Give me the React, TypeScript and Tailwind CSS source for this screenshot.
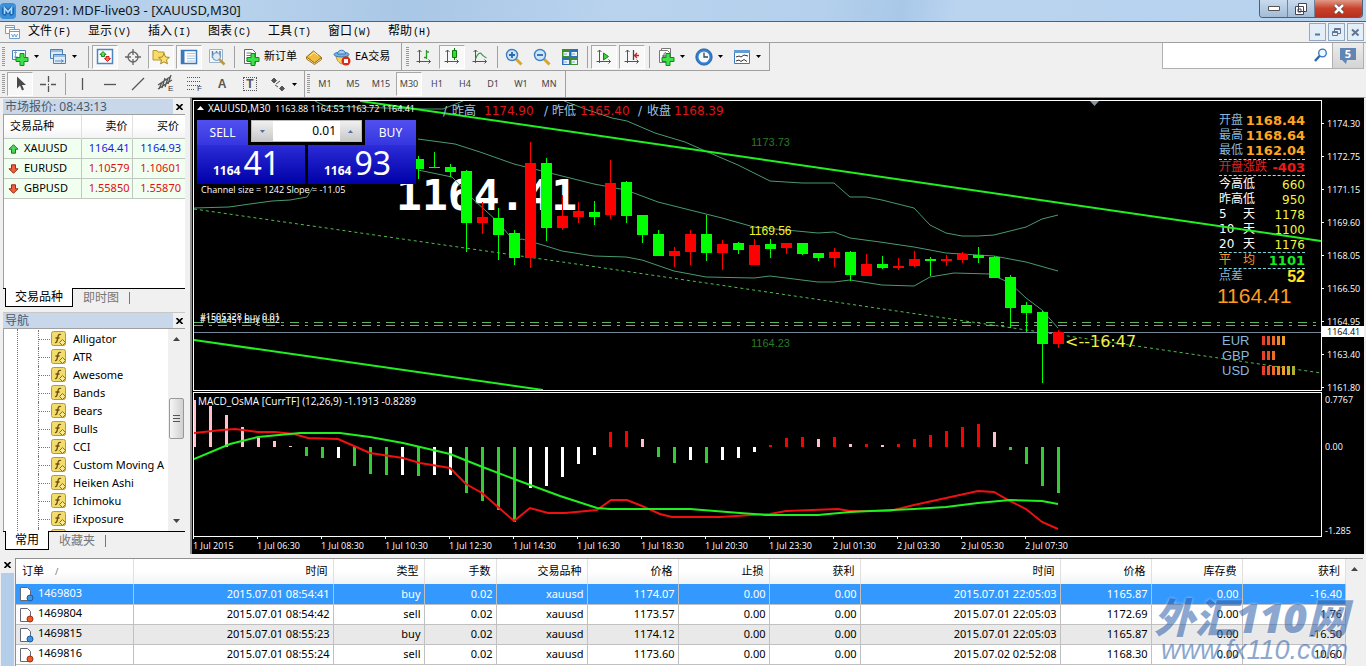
// App.tsx
import React from "react";

type Candle = [color: string, high: number, low: number, top: number, bottom: number];

const STEP = 16;
const FIRST_CANDLE = 14;
const G = "#00ff00";
const R = "#ff0000";

const candles: Candle[] = [
  [G, 55, 78, 58, 68],
  [G, 51, 66, 66, 67],
  [G, 63, 76, 66, 71],
  [G, 69, 151, 70, 122],
  [R, 101, 133, 116, 122],
  [G, 107, 159, 117, 134],
  [G, 129, 164, 132, 157],
  [R, 41, 167, 62, 157],
  [G, 57, 140, 62, 127],
  [R, 94, 129, 115, 127],
  [R, 101, 122, 110, 116],
  [G, 100, 124, 111, 116],
  [R, 59, 118, 82, 114],
  [G, 80, 122, 81, 115],
  [G, 114, 142, 114, 134],
  [G, 129, 155, 133, 155],
  [R, 146, 166, 150, 155],
  [R, 129, 164, 133, 151],
  [G, 114, 160, 133, 152],
  [R, 139, 169, 143, 152],
  [G, 141, 153, 142, 149],
  [R, 138, 164, 144, 164],
  [G, 138, 157, 143, 148],
  [R, 142, 153, 142, 147],
  [G, 142, 154, 142, 153],
  [G, 152, 160, 152, 157],
  [R, 147, 166, 151, 157],
  [G, 150, 180, 151, 174],
  [R, 153, 175, 163, 175],
  [G, 155, 168, 163, 167],
  [R, 157, 169, 165, 167],
  [R, 150, 166, 158, 165],
  [G, 156, 175, 158, 160],
  [R, 154, 165, 158, 160],
  [R, 151, 162, 153, 159],
  [G, 146, 162, 154, 157],
  [G, 155, 177, 156, 177],
  [G, 174, 227, 176, 207],
  [G, 201, 231, 204, 212],
  [G, 210, 282, 211, 243],
  [R, 229, 247, 231, 243],
];

// MACD histogram: signed height above (+) or below (-) zero
const P = "#ffc0cb";
const W = "#ffffff";
const L = "#32cd32";
const histogram: [string, number][] = [
  [P, 47], [P, 41], [P, 32], [P, 20], [P, 9], [P, 6], [P, 1], [L, -9],
  [L, -11], [W, -11], [L, -19], [L, -27], [L, -28], [W, -28], [L, -29], [W, -28],
  [W, -28], [L, -46], [L, -54], [L, -63], [L, -75], [W, -41], [W, -39], [W, -30],
  [W, -17], [W, -8], [R, 15], [R, 16], [P, 8], [L, -10], [L, -16], [W, -13],
  [L, -16], [W, -13], [W, -11], [W, -5], [R, 2], [R, 9], [R, 10], [P, 8],
  [R, 10], [P, 3], [R, 3], [P, 2], [R, 3], [R, 8], [R, 12], [R, 16],
  [R, 20], [R, 23], [P, 15], [L, -3], [L, -17], [L, -39], [L, -46],
];

const upperBand =
  "370,0 394,9 418,17 433,20 461,32 491,41 516,52 544,64 576,80 608,82 640,82 656,96 672,96 688,99 720,107 736,124 752,132 768,135 784,135 800,134 832,126 848,118 864,114";
const middleBand =
  "224,38 261,43 286,51 320,63 352,71 368,75 400,83 432,89 464,101 496,109 528,117 560,126 592,129 624,132 640,131 656,137 686,141 720,146 752,152 784,154 800,155 832,161 864,170";
const lowerBand =
  "224,69 258,76 280,99 304,121 320,140 328,138 352,145 368,150 400,155 432,156 448,159 480,170 512,176 560,177 576,175 592,177 624,181 640,181 656,179 688,184 720,185 736,176 760,172 796,173 816,182 832,197 848,209 864,227";
const macdLine =
  "0,40 28,37 41,36 64,39 81,39 100,41 114,45 144,46 160,53 176,60 209,65 226,70 256,75 272,91 288,100 320,128 336,115 354,120 371,120 403,117 417,107 433,107 448,113 466,121 478,124 526,124 576,121 592,118 644,116 656,118 696,118 720,112 752,105 784,98 800,99 816,108 832,116 848,129 864,136";
const signalLine =
  "0,66 36,51 64,44 106,40 146,40 176,44 209,50 256,61 286,73 320,86 366,103 403,115 416,116 496,116 546,120 572,122 624,122 656,119 720,116 752,114 784,110 816,107 848,108 864,111";

const menus = [
  ["文件", "(F)"],
  ["显示", "(V)"],
  ["插入", "(I)"],
  ["图表", "(C)"],
  ["工具", "(T)"],
  ["窗口", "(W)"],
  ["帮助", "(H)"],
];

const quotes = [
  { symbol: "XAUUSD", bid: "1164.41", ask: "1164.93", up: true },
  { symbol: "EURUSD", bid: "1.10579", ask: "1.10601", up: false },
  { symbol: "GBPUSD", bid: "1.55850", ask: "1.55870", up: false },
];

const indicators = [
  "Alligator", "ATR", "Awesome", "Bands", "Bears", "Bulls", "CCI",
  "Custom Moving A", "Heiken Ashi", "Ichimoku", "iExposure", "",
];

const periods = ["M1", "M5", "M15", "M30", "H1", "H4", "D1", "W1", "MN"];

const prices = [
  "1174.30", "1172.75", "1171.15", "1169.60", "1168.05",
  "1166.50", "1164.95", "1163.40", "1161.80",
];

const times = [
  "1 Jul 2015", "1 Jul 06:30", "1 Jul 08:30", "1 Jul 10:30", "1 Jul 12:30",
  "1 Jul 14:30", "1 Jul 16:30", "1 Jul 18:30", "1 Jul 20:30", "1 Jul 23:30",
  "2 Jul 01:30", "2 Jul 03:30", "2 Jul 05:30", "2 Jul 07:30",
];

const orderHeads = ["时间", "类型", "手数", "交易品种", "价格", "止损", "获利", "时间", "价格", "库存费", "获利"];

const orders = [
  ["1469803", "2015.07.01 08:54:41", "buy", "0.02", "xauusd", "1174.07", "0.00", "0.00", "2015.07.01 22:05:03", "1165.87", "0.00", "-16.40"],
  ["1469804", "2015.07.01 08:54:42", "sell", "0.02", "xauusd", "1173.57", "0.00", "0.00", "2015.07.01 22:05:03", "1172.69", "0.00", "1.76"],
  ["1469815", "2015.07.01 08:55:23", "buy", "0.02", "xauusd", "1174.12", "0.00", "0.00", "2015.07.01 22:05:03", "1165.87", "0.00", "-16.50"],
  ["1469816", "2015.07.01 08:55:24", "sell", "0.02", "xauusd", "1173.60", "0.00", "0.00", "2015.07.02 02:52:08", "1168.30", "0.00", "10.60"],
];

const Icon = ({ children }: { children: React.ReactNode }) => (
  <svg width="18" height="18" viewBox="0 0 18 18" fill="none" className="shrink-0">
    {children}
  </svg>
);

const Plus = ({ x = 5, y = 5 }) => (
  <path
    d={`M${x + 4} ${y + 0.5}h4v4h4v4h-4v4h-4v-4h-4v-4h4z`}
    fill="#3fe04a"
    stroke="#0f8a1c"
  />
);

const Axes = () => (
  <path d="M4.5 2v13M1.5 13.5h14M2.5 4l2-2 2 2M13.5 11.5l2 2-2 2" stroke="#555" />
);

const Tool = ({ label, on, children }: { label: string; on?: boolean; children: React.ReactNode }) => (
  <button
    aria-label={label}
    className={
      on
        ? "flex h-6 w-[26px] mx-px shrink-0 items-center justify-center border border-[#a8a8a8] border-b-white border-r-white bg-[#f8f8f8]"
        : "flex h-6 w-7 shrink-0 items-center justify-center"
    }
  >
    {children}
  </button>
);

const Caret = () => (
  <svg width="5" height="3" viewBox="0 0 5 3" className="mr-[5px] shrink-0">
    <path d="M0 0h5L2.5 3z" fill="#000" />
  </svg>
);

const Sep = () => <span className="mr-[2px] ml-[3px] h-[22px] w-px shrink-0 bg-[#a0a0a0]" />;

const Grip = () => (
  <span className="mr-px ml-[2px] h-5 w-[3px] shrink-0 bg-[repeating-linear-gradient(#999_0_1px,transparent_1px_2px)]" />
);

const Close = ({ label }: { label: string }) => (
  <button aria-label={label} className="flex h-3 w-3 items-center justify-center">
    <svg width="7" height="6" viewBox="0 0 7 6">
      <path d="M.5 0l6 6M6.5 0l-6 6" stroke="#000" strokeWidth="1.6" />
    </svg>
  </button>
);

const TitleBar = () => (
  <header className="flex h-[22px] items-start border-b border-[#4a6280] bg-[linear-gradient(100deg,#a5c3e2_0%,#bcd5ee_14%,#a9c7e6_30%,#b9d3ee_45%,#b4d0ec_60%,#a9c8e8_66%,#bad4f0_70%,#b7d2ee_100%)]">
    <svg width="16" height="18" viewBox="0 0 16 18" className="mt-[2px]">
      <rect y="1" width="16" height="16" rx="4" fill="#3a8fd8" />
      <path d="M2 6l3-2 3 3 3-3 3 2v6l-3 2-3-3-3 3-3-2z" fill="#1c64ae" />
      <path d="M4.5 12V6l3.500 4 3.500-4v6" stroke="#a8dcff" strokeWidth="1.6" fill="none" />
    </svg>
    <h1 className="ml-[5px] flex-1 text-[13px] leading-[21px] text-[#101820]">807291: MDF-live03 - [XAUUSD,M30]</h1>
    <div className="mr-[3px] flex h-[18px] overflow-hidden rounded-b border border-t-0 border-[#4d6078]">
      <button aria-label="最小化" className="flex w-7 items-center justify-center border-r border-[#6f839c] bg-[linear-gradient(#c9dbee,#a2bbd6)]">
        <svg width="12" height="5" viewBox="0 0 12 5"><path d="M.5.5h11v4H.5z" fill="#fff" stroke="#555" /></svg>
      </button>
      <button aria-label="还原" className="flex w-[27px] items-center justify-center border-r border-[#6f839c] bg-[linear-gradient(#c9dbee,#a2bbd6)]">
        <svg width="12" height="12" viewBox="0 0 12 12" fill="#fff" stroke="#445">
          <path d="M3.5.5h8v8h-8zM.5 3.5h8v8h-8zM3 6h3v3H3z" />
        </svg>
      </button>
      <button aria-label="关闭" className="flex w-[47px] items-center justify-center bg-[linear-gradient(#e09a86,#c8412a_50%,#b8301c)]">
        <svg width="12" height="10" viewBox="0 0 12 10">
          <path d="M2 1l8 8M10 1L2 9" stroke="#544" strokeWidth="4" />
          <path d="M2 1l8 8M10 1L2 9" stroke="#fff" strokeWidth="2.5" />
        </svg>
      </button>
    </div>
  </header>
);

const MenuBar = () => (
  <nav className="flex h-[21px] items-center border-b border-[#a0a0a0]">
    <svg width="16" height="15" viewBox="0 0 16 15" className="mr-[7px] ml-[5px]" fill="#fff" stroke="#6f9fd0">
      <path d="M.5.5h9v8h-9z" />
      <path d="M.5 2.5h9" />
      <path d="M4.500 4.500h10v9h-10zM4.500 6.500h10" />
      <path d="M6.500 9l1.500 3 1.500-3 1.500 3 1.500-3" fill="none" />
    </svg>
    {menus.map(([name, key]) => (
      <a key={key} href="#" className="w-[60px] whitespace-nowrap text-xs leading-4 text-black">
        {name}
        <span className="ml-px font-['Liberation_Mono',monospace] text-[10px]">{key}</span>
      </a>
    ))}
    <div className="mr-[2px] ml-auto flex gap-[2px]">
      <button aria-label="最小化图表" className="flex h-[18px] w-[17px] items-center justify-center border border-[#8fa9c4] bg-[#e3eef9]">
        <svg width="9" height="9" viewBox="0 0 9 9"><path d="M2 6.500h5" stroke="#5f7590" strokeWidth="2" /></svg>
      </button>
      <button aria-label="还原图表" className="flex h-[18px] w-[17px] items-center justify-center border border-[#8fa9c4] bg-[#e3eef9]">
        <svg width="9" height="9" viewBox="0 0 9 9" fill="none" stroke="#5f7590"><path d="M2.500 3V.5h6v5H6M.5 3.500h5v4h-5zM.5 4.500h5M3 1.500h5" /></svg>
      </button>
      <button aria-label="关闭图表" className="flex h-[18px] w-[17px] items-center justify-center border border-[#8fa9c4] bg-[#e3eef9]">
        <svg width="9" height="9" viewBox="0 0 9 9"><path d="M1 1.500l6.500 6M7.500 1.500L1 7.500" stroke="#5f7590" strokeWidth="2" /></svg>
      </button>
    </div>
  </nav>
);

const MainToolbar = () => (
  <div className="flex h-7 items-center">
    <div className="flex h-7 w-[402px] shrink-0 items-center border-r border-b border-[#a0a0a0]">
      <Grip />
      <Tool label="新图表">
        <Icon>
          <path d="M1.5 2.5h13v9h-13z" fill="#fff" stroke="#4a7fb8" />
          <path d="M4.5 4v6M3 5l1.500-1.500L6 5M3 9h4" stroke="#7ba3cc" />
          <Plus />
        </Icon>
      </Tool>
      <Caret />
      <Tool label="配置文件">
        <Icon>
          <path d="M1.5 1.5h12v9h-12z" fill="#dcebf8" stroke="#4a7fb8" />
          <path d="M4.5 6.5h12v9h-12z" fill="#dcebf8" stroke="#4a7fb8" />
          <path d="M2 3h11M5 8h11M6 13h9M12 11.500l2 1.500-2 1.500" stroke="#5d8fc4" />
        </Icon>
      </Tool>
      <Caret />
      <span className="w-[3px]" />
      <Sep />
      <Tool label="市场报价" on>
        <Icon>
          <path d="M1.5 1.5h15v14h-15z" fill="#fff" stroke="#4a86c4" strokeWidth="1.5" />
          <path d="M7 3.500l3 3H8.500v2h-3v-2H4z" fill="#5fdc5f" stroke="#1a8a1a" />
          <path d="M11.500 13.500l3-3H13v-2h-3v2H8.500z" fill="#f66" stroke="#c22" />
        </Icon>
      </Tool>
      <Tool label="数据窗口">
        <Icon>
          <circle cx="9" cy="9" r="5" stroke="#666" strokeWidth="1.3" />
          <path d="M9 1v6M9 11v6M1 9h6M11 9h6" stroke="#666" strokeWidth="1.3" />
        </Icon>
      </Tool>
      <Tool label="导航" on>
        <Icon>
          <path d="M1 2.500h4l1 1.500h6v8H1z" fill="#f7dc6a" stroke="#b8962a" />
          <path d="M12 5.500l1.600 3.500 3.800.4-2.900 2.500.9 3.900-3.400-2-3.400 2 .9-3.900-2.900-2.500 3.800-.4z" fill="#fbe26a" stroke="#a8862a" />
        </Icon>
      </Tool>
      <Tool label="终端" on>
        <Icon>
          <path d="M1.5 2.5h15v13h-15z" fill="#fff" stroke="#3a78bc" strokeWidth="1.5" />
          <path d="M2 3h2.500v12H2z" fill="#3a78bc" />
          <path d="M7 5.500h8M7 8h8M7 10.500h8M7 13h8" stroke="#a9c4e0" />
        </Icon>
      </Tool>
      <Tool label="策略测试">
        <Icon>
          <path d="M1.5 1.5h13v13h-13z" fill="#f3f7fb" stroke="#9ab2c8" />
          <path d="M4.5 3v7M8.500 3v3M12 3v6" stroke="#5d7fa4" strokeWidth="1.5" />
          <circle cx="8.500" cy="8.500" r="4" fill="#d4e8f8cc" stroke="#6b8fb4" />
          <path d="M11.500 11.500l5 5" stroke="#c9962e" strokeWidth="2.5" />
        </Icon>
      </Tool>
      <Sep />
      <button className="flex h-6 items-center pl-[5px] text-[11px] whitespace-nowrap text-black">
        <Icon>
          <path d="M2.500 1.500h8l3 3v11h-11z" fill="#fff" stroke="#666" />
          <path d="M4.500 5h5M4.500 7.500h7M4.500 10h4M4.500 12.500h3" stroke="#777" />
          <Plus />
        </Icon>
        <span className="ml-1">新订单</span>
      </button>
      <span className="w-[3px]" />
      <Tool label="MetaEditor">
        <Icon>
          <path d="M1.500 9l7-6 8 6.500-7 5.500z" fill="#f0bc3e" stroke="#9c6f14" />
          <path d="M1.500 9v2l8 5.500 7-5V9.500l-7 5.500z" fill="#fff3c8" stroke="#9c6f14" />
          <path d="M5 8l4-3.500 4 3" stroke="#fff0b0" />
        </Icon>
      </Tool>
      <button className="flex h-6 items-center pl-[5px] text-[11px] whitespace-nowrap text-black">
        <Icon>
          <path d="M3 8c1 5 3 7 6 8 3-1 5-3 6-8z" fill="#f5d35a" stroke="#b58e22" />
          <ellipse cx="8.500" cy="6.500" rx="7.500" ry="2.500" fill="#6fb1e8" stroke="#3a78b4" />
          <path d="M4.500 6c0-5 8-5 8 0z" fill="#9fd0f4" stroke="#3a78b4" />
          <circle cx="13" cy="13" r="4.500" fill="#dc2a1a" />
          <path d="M11 11h4v4h-4z" fill="#fff" />
        </Icon>
        <span className="ml-1">EA交易</span>
      </button>
    </div>
    <div className="flex h-7 w-[368px] shrink-0 items-center border-r border-b border-[#a0a0a0] pl-[2px]">
      <Grip />
      <Tool label="柱状图"><Icon><Axes /><path d="M11.500 2v9M9 9.500h2.500M11.500 4H14" stroke="#2c9a2c" strokeWidth="1.3" /></Icon></Tool>
      <Tool label="蜡烛图" on><Icon><Axes /><path d="M11.500 0v12" stroke="#0a7a0a" /><path d="M9.500 2.500h4v7h-4z" fill="#35dd35" stroke="#0a7a0a" /></Icon></Tool>
      <Tool label="折线图"><Icon><Axes /><path d="M4.500 11c2-6 5-7 6-5s3 3 5 4" stroke="#3a9a4a" strokeWidth="1.2" /></Icon></Tool>
      <Sep />
      <Tool label="放大">
        <Icon>
          <path d="M11 11l5.500 5.500" stroke="#d8a52e" strokeWidth="3" />
          <circle cx="7" cy="7" r="5.500" fill="#cfe6fa" stroke="#3f7fc0" strokeWidth="1.4" />
          <path d="M4 7h6M7 4v6" stroke="#2a6ab0" strokeWidth="1.8" />
        </Icon>
      </Tool>
      <Tool label="缩小">
        <Icon>
          <path d="M11 11l5.500 5.500" stroke="#d8a52e" strokeWidth="3" />
          <circle cx="7" cy="7" r="5.500" fill="#cfe6fa" stroke="#3f7fc0" strokeWidth="1.4" />
          <path d="M4 7h6" stroke="#2a6ab0" strokeWidth="1.8" />
        </Icon>
      </Tool>
      <Tool label="平铺窗口">
        <Icon>
          <path d="M1 1h8v8H1zM9 9h8v8H9z" fill="#3d8f2a" />
          <path d="M9 1h8v8H9zM1 9h8v8H1z" fill="#2f6fb8" />
          <path d="M2.500 4H8v4H2.500zM10.500 4H16v4h-5.500zM2.500 12H8v4H2.500zM10.500 12H16v4h-5.500z" fill="#e9f4ff" />
          <path d="M3 6h3M11 6h3M3 14h3M11 14h3" stroke="#8ab" />
        </Icon>
      </Tool>
      <Sep />
      <Tool label="自动滚动" on><Icon><Axes /><path d="M8.500 5v7l5-3.500z" fill="#3fd23f" stroke="#148014" /></Icon></Tool>
      <Tool label="图表平移" on><Icon><Axes /><path d="M10.500 2v10" stroke="#444" strokeWidth="1.3" /><path d="M16 7.500h-4M14 5l-2.500 2.500L14 10" stroke="#c22" strokeWidth="1.3" /></Icon></Tool>
      <Sep />
      <Tool label="指标列表">
        <Icon>
          <path d="M4.500.5h9v12h-9z" fill="#fff" stroke="#777" />
          <path d="M2.500 2.500h8l2 2v10h-10z" fill="#fff" stroke="#777" />
          <path d="M9 5c-2-1-2 1-2.500 6M5 8h4" stroke="#555" />
          <Plus />
        </Icon>
      </Tool>
      <Caret />
      <Tool label="时间周期">
        <Icon>
          <circle cx="9" cy="9" r="6.800" fill="#f2f8fe" stroke="#2f7fd0" strokeWidth="2.6" />
          <circle cx="9" cy="9" r="8.200" stroke="#1a4f92" strokeWidth=".8" />
          <path d="M9 4.500V9h4" stroke="#444" strokeWidth="1.3" />
        </Icon>
      </Tool>
      <Caret />
      <Tool label="模板">
        <Icon>
          <path d="M1.500 2.500h15v13h-15z" fill="#fff" stroke="#3a78bc" />
          <path d="M1 2h16v3H1z" fill="#5f9cd8" />
          <path d="M3 9l3-1 2 1 3-2 4 1M3 13l3-1 2 1.500 3-2 3 2" stroke="#333" />
        </Icon>
      </Tool>
      <Caret />
    </div>
    <form className="mr-[2px] ml-auto flex h-[26px] items-start self-start">
      <div className="flex h-[26px] w-[171px] items-center border border-t-0 border-[#b0b0b0] bg-white pr-1">
        <input aria-label="搜索" className="w-0 flex-1 px-1 text-xs outline-none" />
        <svg width="15" height="15" viewBox="0 0 15 15" fill="none">
          <circle cx="9.500" cy="5" r="3.800" fill="#eef6ff" stroke="#2f73c0" strokeWidth="1.3" />
          <path d="M6.500 8L2 13" stroke="#2f63a8" strokeWidth="2.4" />
        </svg>
      </div>
      <button type="button" aria-label="消息" className="flex h-[26px] w-[31px] items-center justify-center border-r border-b border-[#b0b0b0] bg-[linear-gradient(#ececec,#d4d4d4)]">
        <svg width="16" height="16" viewBox="0 0 16 16">
          <path d="M0 0h16v12H7l-1 4-4-4H0z" fill="#5f86b4" />
          <text x="8" y="10" textAnchor="middle" className="font-['Noto_Sans',sans-serif] text-[11px] font-bold" fill="#fff">5</text>
        </svg>
      </button>
    </form>
  </div>
);

const LineToolbar = () => (
  <div className="flex h-[26px] items-center">
    <div className="flex h-[26px] w-[305px] shrink-0 items-center border-r border-[#a0a0a0]">
      <Grip />
      <Tool label="光标" on><Icon><path d="M6 1.500v12l3-3 2 5 2-1-2-4.500h4z" fill="#4a4a4a" /></Icon></Tool>
      <Tool label="十字准线"><Icon><path d="M9.500 1v6M9.500 11v6M1 9.500h6M12 9.500h5M9 9.500h1" stroke="#555" strokeWidth="1.3" /></Icon></Tool>
      <Sep />
      <Tool label="垂直线"><Icon><path d="M9.500 3v12" stroke="#555" strokeWidth="1.3" /></Icon></Tool>
      <Tool label="水平线"><Icon><path d="M3 9.500h12" stroke="#555" strokeWidth="1.3" /></Icon></Tool>
      <Tool label="趋势线"><Icon><path d="M3 15L15 3" stroke="#555" strokeWidth="1.3" /></Icon></Tool>
      <Tool label="等距通道">
        <Icon>
          <path d="M1 10L13 2M1 14L15 5M5 13L8 3M8 12l3-9M11 9l3-9M2 14l3-7" stroke="#555" strokeWidth="1.3" />
          <text x="11" y="16" fontSize="8" fontFamily="Liberation Sans, sans-serif" fill="#333">E</text>
        </Icon>
      </Tool>
      <Tool label="斐波纳契">
        <Icon>
          <path d="M2 2.500h14M2 6.500h14M2 10.500h14M2 14.500h8" stroke="#555" strokeDasharray="1 1" />
          <text x="12" y="16" fontSize="8" fontFamily="Liberation Sans, sans-serif" fill="#333">F</text>
        </Icon>
      </Tool>
      <Tool label="文字"><span className="font-['Liberation_Sans',sans-serif] text-xs font-bold text-[#555]">A</span></Tool>
      <Tool label="文字标签">
        <span className="flex h-[14px] w-[14px] items-center justify-center border border-dotted border-[#555] font-['Liberation_Sans',sans-serif] text-xs font-bold text-[#555]">T</span>
      </Tool>
      <Tool label="箭头">
        <Icon><path d="M5 3l2.500 2.500L5 8 2.500 5.500zM13 11l2.500 2.500L13 16l-2.500-2.500zM11 6L7 9M6 10l3 2" fill="#555" stroke="#555" /></Icon>
      </Tool>
      <Caret />
    </div>
    <div className="flex h-[26px] w-[261px] shrink-0 items-center border-r border-[#a0a0a0]">
      <Grip />
      {periods.map((p) => (
        <Tool key={p} label={p} on={p === "M30"}>
          <span className="text-[9px] text-[#444]">{p}</span>
        </Tool>
      ))}
    </div>
  </div>
);

const QuoteArrow = ({ up }: { up: boolean }) => (
  <svg width="11" height="10" viewBox="0 0 11 10" className="mr-[5px] ml-1 inline-block">
    {up ? (
      <path d="M5.500.7l4.500 4.500H7.500v4h-4v-4H1z" fill="#4fd45a" stroke="#18792a" />
    ) : (
      <path d="M5.500 9.300L1 4.800h2.500v-4h4v4H10z" fill="#f0603a" stroke="#9c2a14" />
    )}
  </svg>
);

const PanelTitle = ({ children }: { children: string }) => (
  <div className="flex h-[15px] items-center justify-between">
    <h2 className="flex-1 overflow-hidden bg-[#c8d8ea] pl-[2px] text-xs leading-[15px] whitespace-nowrap text-[#4a5a6c]">{children}</h2>
    <Close label={`关闭 ${children}`} />
  </div>
);

const Tabs = ({ active, other }: { active: string; other: string }) => (
  <div className="flex h-5 items-start border-t border-black bg-[#f0f0f0] text-xs">
    <button className="-mt-px ml-[2px] h-[19px] border border-t-0 border-black bg-white px-[9px] text-black">{active}</button>
    <button className="h-[18px] px-[10px] text-[#777]">{other}</button>
    <span className="mt-[3px] h-3 w-px bg-[#777]" />
  </div>
);

const MarketWatch = () => (
  <section className="mt-px">
    <PanelTitle>市场报价: 08:43:13</PanelTitle>
    <div className="h-[174px] border-t border-l border-[#a0a0a0] bg-white">
      <table className="w-full table-fixed border-collapse text-[11px]">
        <thead>
          <tr className="h-[23px] bg-[linear-gradient(#fff_50%,#f2f3f5)] text-right">
            <th className="w-[77px] border-r border-[#e0e0e0] pl-[6px] text-left font-normal">交易品种</th>
            <th className="w-[51px] border-r border-[#e0e0e0] pr-1 font-normal">卖价</th>
            <th className="pr-[6px] font-normal">买价</th>
          </tr>
        </thead>
        <tbody>
          {quotes.map((q) => (
            <tr key={q.symbol} className={q.up ? "h-5 text-right text-[#1a1ae0]" : "h-5 text-right text-[#e01010]"}>
              <td className="border-y border-r border-[#c0c8c0] bg-[#f0fff0] text-left whitespace-nowrap text-black">
                <QuoteArrow up={q.up} />
                {q.symbol}
              </td>
              <td className="border-y border-r border-[#c0c8c0] bg-[#f0fff0] pr-[2px]">{q.bid}</td>
              <td className="border-y border-[#c0c8c0] bg-[#f0fff0] pr-1">{q.ask}</td>
            </tr>
          ))}
        </tbody>
      </table>
    </div>
    <Tabs active="交易品种" other="即时图" />
  </section>
);

const Navigator = () => (
  <section className="mt-1 flex min-h-0 flex-1 flex-col border-t border-[#c8c8c8]">
    <PanelTitle>导航</PanelTitle>
    <div className="flex min-h-0 flex-1 border-t border-l border-[#a0a0a0] bg-white">
      <ul className="ml-[13px] min-w-0 flex-1 overflow-hidden border-l border-dotted border-[#777] pt-px">
        {indicators.map((name) => (
          <li key={name} className="ml-5 flex h-[18px] items-center border-l border-dotted border-[#777] text-[11px] whitespace-nowrap text-black">
            <span className="w-[11px] shrink-0 border-t border-dotted border-[#777]" />
            <svg width="16" height="16" viewBox="0 0 16 16" className="mr-[6px] ml-[1px] shrink-0">
              <rect x=".5" y=".5" width="14" height="14" rx="2" fill="#f2dc6c" stroke="#b89a30" />
              <path d="M10 3.500c-3-1-3 2-3.500 4.500S5.500 12 4 11.500M4.500 7h4" stroke="#6b4f10" strokeWidth="1.3" fill="none" />
              <path d="M11.500 8.500l3 3-3 3-3-3z" fill="#f8e890" stroke="#8c7020" />
            </svg>
            {name}
          </li>
        ))}
      </ul>
      <div className="flex w-[17px] shrink-0 flex-col items-center bg-[#f0f0f0] py-2">
        <svg width="7" height="4" viewBox="0 0 7 4"><path d="M3.500 0L7 4H0z" fill="#444" /></svg>
        <span className="mt-[57px] flex h-[41px] w-[15px] flex-col items-center justify-center gap-[2px] rounded-[2px] border border-[#999] bg-[linear-gradient(90deg,#f6f6f6,#d0d0d0)]">
          <i className="h-px w-[7px] bg-[#555]" />
          <i className="h-px w-[7px] bg-[#555]" />
          <i className="h-px w-[7px] bg-[#555]" />
        </span>
        <svg width="7" height="4" viewBox="0 0 7 4" className="mt-auto"><path d="M3.500 4L0 0h7z" fill="#444" /></svg>
      </div>
    </div>
    <Tabs active="常用" other="收藏夹" />
  </section>
);

const OneClick = () => (
  <div className="absolute top-[19px] left-[3px] w-[219px] font-['Noto_Sans','Noto_Sans_CJK_SC',sans-serif] text-white">
    <div className="flex h-[25px] justify-between">
      <button className="w-[51px] bg-[linear-gradient(#5050f0,#3636e0)] text-xs">SELL</button>
      <div className="flex h-[22px] w-[111px] border border-[#bbb] bg-white">
        <button aria-label="减少手数" className="flex w-[21px] items-center justify-center bg-[linear-gradient(#f0f0f0,#c8c8c8)]">
          <svg width="5" height="3" viewBox="0 0 5 3"><path d="M0 0h5L2.500 3z" fill="#5070a0" /></svg>
        </button>
        <input aria-label="手数" defaultValue="0.01" className="w-0 flex-1 pr-1 text-right text-xs text-black outline-none" />
        <button aria-label="增加手数" className="flex w-[21px] items-center justify-center bg-[linear-gradient(#f0f0f0,#c8c8c8)]">
          <svg width="5" height="3" viewBox="0 0 5 3"><path d="M2.500 0L5 3H0z" fill="#5070a0" /></svg>
        </button>
      </div>
      <button className="w-[51px] bg-[linear-gradient(#5050f0,#3636e0)] text-xs">BUY</button>
    </div>
    <div className="grid h-[39px] grid-cols-2 gap-[3px]">
      {["41", "93"].map((pips) => (
        <div key={pips} className="flex items-baseline justify-center gap-[3px] bg-[linear-gradient(#2c2cd8,#0000a8)] pr-[9px] leading-9">
          <b className="text-xs">1164</b>
          <span className="text-[32px]">{pips}</span>
        </div>
      ))}
    </div>
  </div>
);

const InfoRow = ({ label, value, tone, num }: { label: string; value: string; tone: string; num: string }) => (
  <div className="flex h-[15px] items-center justify-between whitespace-nowrap">
    <span className={tone}>{label}</span>
    <span className={num}>{value}</span>
  </div>
);

const orangeNum = "text-[13px] font-bold text-[#ffa520]";
const yellowNum = "text-xs text-[#f4f43a]";

const InfoPanel = () => (
  <div className="absolute top-3 right-4 w-[86px] font-['DejaVu_Sans','Noto_Sans_CJK_SC',sans-serif] text-xs leading-[15px]">
    <InfoRow label="开盘" value="1168.44" tone="text-[#87b8dc]" num={orangeNum} />
    <InfoRow label="最高" value="1168.64" tone="text-[#87b8dc]" num={orangeNum} />
    <InfoRow label="最低" value="1162.04" tone="text-[#87b8dc]" num={orangeNum} />
    <div className="my-px border-y border-dashed border-[#e8c8c0]">
      <InfoRow label="开盘涨跌" value="-403" tone="text-[#e02020]" num="text-[13px] font-bold text-[#f01818]" />
    </div>
    <InfoRow label="今高低" value="660" tone="text-white" num={yellowNum} />
    <InfoRow label="昨高低" value="950" tone="text-white" num={yellowNum} />
    {[["5", "1178"], ["10", "1100"], ["20", "1176"]].map(([days, range]) => (
      <div key={days} className="flex h-[15px] text-white">
        <span className="w-6">{days}</span>
        <span>天</span>
        <span className="ml-auto text-xs text-[#f4f43a]">{range}</span>
      </div>
    ))}
    <div className="border-y border-dashed border-[#7fd0d8]">
      <div className="flex h-[15px] text-[#ff9820]">
        <span className="w-6">平</span>
        <span>均</span>
        <span className="ml-auto text-[13px] font-bold text-[#10f020]">1101</span>
      </div>
    </div>
    <InfoRow label="点差" value="52" tone="text-[#87b8dc]" num="font-['Liberation_Sans',sans-serif] text-base font-bold text-[#ffe620]" />
    <div className="-ml-[2px] h-6 font-['Liberation_Sans',sans-serif] text-[21px] leading-6 text-[#ff9c1c]">1164.41</div>
    <div className="mt-[25px] font-['Liberation_Sans',sans-serif] text-[13px] leading-[15px] text-[#87b8dc]">
      {[
        ["EUR", ["#e8402a", "#e8502a", "#f06a28", "#f08828", "#f0a028"]],
        ["GBP", ["#e8402a", "#e8502a", "#f06a28"]],
        ["USD", ["#e8402a", "#e8502a", "#f06a28", "#f08828", "#f0a028", "#e0a828", "#b8b028"]],
      ].map(([name, bars]) => (
        <div key={name as string} className="flex h-[15px] items-center pl-[3px]">
          <span className="w-10">{name}</span>
          <span className="flex gap-[2px]">
            {(bars as string[]).map((c, i) => (
              <i key={i} className="h-[9px] w-[3px]" style={{ background: c }} />
            ))}
          </span>
        </div>
      ))}
    </div>
  </div>
);

const chartTitle = "font-['Open_Sans','Noto_Sans',sans-serif] text-[10px]";
const chartText = "font-['Open_Sans','Noto_Sans',sans-serif] text-[9px]";
const verdana = "font-['DejaVu_Sans','Noto_Sans_CJK_SC',sans-serif] text-xs";
const arial = "font-['Liberation_Sans',sans-serif]";

const PriceChart = () => (
  <div className="relative min-w-0 flex-1 overflow-hidden border border-white">
    <InfoPanel />
    <svg className="relative block h-full w-full" fill="none" role="img" aria-label="XAUUSD M30">
      <text x="202" y="109" className="font-['DejaVu_Sans_Mono',monospace] text-[43px] font-bold" fill="#fff">1164.41</text>
      <path d="M0 231.500H1400" stroke="#778899" />
      <path d="M0 221.500H1400M0 224.500H1400" stroke="#5cb85c" strokeDasharray="9 6 3 6" />
      <polyline points={upperBand} stroke="#4a9a70" />
      <polyline points={middleBand} stroke="#4a9a70" />
      <polyline points={lowerBand} stroke="#4a9a70" />
      <polyline points="0,107 35,106 56,103 78,100 96,99 113,96 119,86" stroke="#4a9a70" />
      <polyline points="121,0 131,5 221,8 249,8 269,0" stroke="#4a9a70" />
      <path d="M0 108L396 165 723 213 1127 272" stroke="#4fc04f" strokeDasharray="3 3" />
      <path d="M166 0L1127 140M0 239L349 289" stroke="#20f020" strokeWidth="2" />
      {candles.map(([color, high, low, top, bottom], i) => {
        const x = (FIRST_CANDLE + i) * STEP;
        return (
          <g key={i} fill={color}>
            <rect x={x} y={high} width="1" height={low - high} />
            <rect x={x - 5} y={top} width="11" height={bottom - top} />
          </g>
        );
      })}
      <path d="M896 0h9l-4.500 5z" fill="#8a949c" />
      <path d="M3 9l3.500-4L10 9z" fill="#fff" />
      <text x="14" y="11" className={chartTitle} fill="#fff">XAUUSD,M30</text>
      <text x="81" y="11" className={chartText} fill="#fff">1163.88 1164.53 1163.72 1164.41</text>
      <text x="7" y="92" className={chartText} fill="#fff">Channel size = 1242 Slope = -11.05</text>
      <text x="6" y="219" className={chartText} fill="#fff">#1505328 buy 0.01</text>
      <text x="6" y="222" className={chartText} fill="#fff">#1504451 buy 0.02</text>
      <g className={verdana} fill="#9cc4e0">
        <text x="249" y="14">/</text>
        <text x="258" y="14">昨高</text>
        <text x="350" y="14">/</text>
        <text x="358" y="14">昨低</text>
        <text x="444" y="14">/</text>
        <text x="453" y="14">收盘</text>
      </g>
      <g className={verdana} fill="#e01414">
        <text x="290" y="14">1174.90</text>
        <text x="386" y="14">1165.40</text>
        <text x="480" y="14">1168.39</text>
      </g>
      <g className={arial} fontSize="11" fill="#2a7a2a">
        <text x="557" y="45">1173.73</text>
        <text x="557" y="246">1164.23</text>
      </g>
      <text x="555" y="134" className={arial} fontSize="12" fill="#f4f420">1169.56</text>
      <text x="871" y="246" className="font-['DejaVu_Sans',sans-serif] text-base" fill="#f0f040">&lt;--16:47</text>
    </svg>
    <OneClick />
  </div>
);

const MacdChart = () => (
  <div className="min-w-0 flex-1 overflow-hidden border border-white">
    <svg className="block h-full w-full" fill="none" role="img" aria-label="MACD">
      {histogram.map(([color, v], i) => (
        <rect key={i} x={i * STEP - 1} y={v > 0 ? 54 - v : 54} width="3" height={Math.abs(v)} fill={color} />
      ))}
      <polyline points={macdLine} stroke="#f01010" strokeWidth="2" />
      <polyline points={signalLine} stroke="#20f020" strokeWidth="2" />
      <text x="4" y="12" className={chartTitle} fill="#fff">MACD_OsMA [CurrTF] (12,26,9) -1.1913 -0.8289</text>
    </svg>
  </div>
);

const ChartWindow = () => (
  <section className="flex min-w-0 flex-1 flex-col border-t border-r-2 border-l-2 border-[#909090] border-r-[#eee] bg-black pt-[2px] pl-px font-['Open_Sans','Noto_Sans',sans-serif] text-[9px] text-white">
    <div className="flex min-h-0 flex-1">
      <PriceChart />
      <ul className="relative w-[42px] shrink-0 pt-[7px]">
        {prices.map((p) => (
          <li key={p} className="flex h-[33px] items-center gap-[3px]">
            <i className="h-px w-[2px] bg-white" />
            {p}
          </li>
        ))}
        <li className="absolute top-[226px] left-0 h-[11px] w-full bg-white pl-[5px] leading-[11px] text-black">1164.41</li>
      </ul>
    </div>
    <div className="mt-px flex h-[145px]">
      <MacdChart />
      <div className="flex w-[42px] shrink-0 flex-col justify-between pt-[2px] pl-[3px] leading-3">
        <span>0.7767</span>
        <span className="mb-[37px]">0.00</span>
        <span>-1.285</span>
      </div>
    </div>
    <div className="flex h-[17px] overflow-hidden">
      {times.map((t) => (
        <span key={t} className="w-16 shrink-0 leading-[14px] whitespace-nowrap">
          <i className="block h-[2px] w-px bg-white" />
          {t}
        </span>
      ))}
    </div>
  </section>
);

const OrderIcon = ({ buy }: { buy: boolean }) => (
  <svg width="15" height="16" viewBox="0 0 15 16" className="mr-1 ml-[3px] inline-block">
    <path d="M1.500 1.500h7l3 3v10h-10z" fill="#fff" stroke="#667" />
    <circle cx="11" cy="12" r="3" fill={buy ? "#3b95e6" : "#ee5a2a"} stroke={buy ? "#1d5a9c" : "#a0300f"} />
  </svg>
);

const Terminal = () => (
  <section className="relative flex h-28 shrink-0 bg-[#f0f0f0] pt-1">
    <div className="flex w-[15px] shrink-0 flex-col items-center pt-px">
      <Close label="关闭终端" />
      <span className="mt-[2px] w-[13px] flex-1 bg-[#b4cde8]" />
    </div>
    <div className="min-w-0 flex-1 overflow-hidden border-t border-l border-[#909090] bg-white">
      <table className="w-full table-fixed border-collapse text-[11px] text-black">
        <colgroup>
          <col className="w-[117px]" />
          <col className="w-[200px]" />
          <col className="w-[91px]" />
          <col className="w-[72px]" />
          <col className="w-[91px]" />
          <col className="w-[91px]" />
          <col className="w-[91px]" />
          <col className="w-[91px]" />
          <col className="w-[200px]" />
          <col className="w-[91px]" />
          <col className="w-[91px]" />
          <col />
        </colgroup>
        <thead>
          <tr className="h-[25px] bg-[linear-gradient(#fff_50%,#f2f3f5)]">
            <th className="border-r border-[#e0e0e0] pl-[6px] text-left font-normal">
              订单 <span className="ml-2 text-[9px] text-[#777]">/</span>
            </th>
            {orderHeads.map((h, i) => (
              <th key={i} className="border-r border-[#e0e0e0] pr-[5px] text-right font-normal">{h}</th>
            ))}
          </tr>
        </thead>
        <tbody>
          {orders.map((row, r) => (
            <tr key={row[0]} className={r === 0 ? "h-5 bg-[#3399ff] text-white" : r === 2 ? "h-5 bg-[#e9e9e9]" : "h-5 bg-white"}>
              {row.map((cell, c) => (
                <td
                  key={c}
                  className={
                    c === 0
                      ? "border-r border-b border-[#c0c0c0] text-left whitespace-nowrap"
                      : "border-r border-b border-[#c0c0c0] pr-[3px] text-right whitespace-nowrap"
                  }
                >
                  {c === 0 && <OrderIcon buy={row[2] === "buy"} />}
                  {cell}
                </td>
              ))}
            </tr>
          ))}
        </tbody>
      </table>
    </div>
    <div className="mr-[3px] flex w-[17px] shrink-0 justify-center border-t border-[#909090] bg-[#f0f0f0] pt-2">
      <svg width="7" height="4" viewBox="0 0 7 4"><path d="M3.500 0L7 4H0z" fill="#444" /></svg>
    </div>
    <div className="pointer-events-none absolute right-[18px] bottom-[3px] text-right text-[#2f62ac] italic opacity-55">
      <p className="text-[41px] leading-[40px] font-black whitespace-nowrap [text-shadow:0_0_3px_#fff]">外汇110网</p>
      <p className="font-['Liberation_Sans',sans-serif] text-[27px] leading-[26px]">www.fx110.com</p>
    </div>
  </section>
);

const App = () => (
  <div className="flex h-screen flex-col overflow-hidden bg-[#f0f0f0] font-['Noto_Sans','Noto_Sans_CJK_SC',sans-serif]">
    <TitleBar />
    <MenuBar />
    <MainToolbar />
    <LineToolbar />
    <main className="flex min-h-0 flex-1">
      <aside className="flex w-[190px] shrink-0 flex-col border-t border-[#b0b0b0] pr-[5px] pb-[3px] pl-[3px]">
        <MarketWatch />
        <Navigator />
      </aside>
      <ChartWindow />
    </main>
    <Terminal />
  </div>
);

export default App;
